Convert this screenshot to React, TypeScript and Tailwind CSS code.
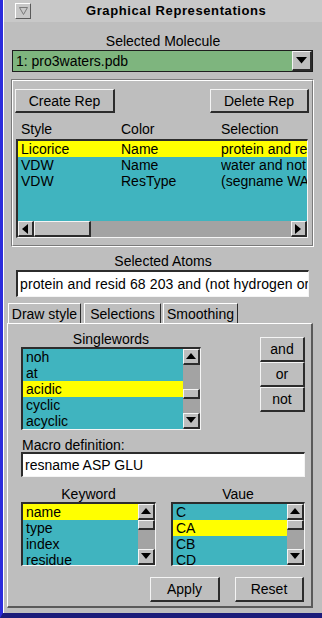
import React from 'react';

const RAISED =
  'border-t border-l border-t-[#f4f4f4] border-l-[#f4f4f4] border-r-2 border-b-2 border-r-[#2c2c2c] border-b-[#2c2c2c]';
const SUNKEN =
  'border-t-2 border-l-2 border-t-[#2c2c2c] border-l-[#2c2c2c] border-r border-b border-r-[#f4f4f4] border-b-[#f4f4f4]';

type Dir = 'up' | 'down' | 'left' | 'right';

const ArrowBtn = ({ dir, size = 'w-[17px] h-[16px]' }: { dir: Dir; size?: string }) => {
  const pts = {
    up: '0,7 5,1 10,7',
    down: '0,1 5,7 10,1',
    left: '7,0 1,5 7,10',
    right: '1,0 7,5 1,10',
  }[dir];
  return (
    <div className={`${size} shrink-0 bg-[#bebebe] ${RAISED} flex items-center justify-center`}>
      <svg width="10" height="10" viewBox="0 0 10 10">
        <polygon points={pts} fill="#000" />
      </svg>
    </div>
  );
};

const VScroll = ({ thumb }: { thumb: string }) => (
  <div className="w-[17px] h-full bg-[#a3a3a3] flex flex-col shrink-0">
    <ArrowBtn dir="up" />
    <div className="flex-1">
      <div className={`w-full bg-[#bebebe] ${RAISED} ${thumb}`} />
    </div>
    <ArrowBtn dir="down" />
  </div>
);

const ListBox = ({
  items,
  sel,
  box,
  thumb,
}: {
  items: string[];
  sel: number;
  box: string;
  thumb: string;
}) => (
  <div className={`${box} ${SUNKEN} bg-[#40b4bf] flex overflow-hidden`}>
    <div className="flex-1 overflow-hidden">
      {items.map((it, i) => (
        <div
          key={it}
          className={`h-4 leading-4 pl-[3px] whitespace-nowrap ${i === sel ? 'bg-[#ffff00]' : ''}`}
        >
          {it}
        </div>
      ))}
    </div>
    <VScroll thumb={thumb} />
  </div>
);

const Button = ({ label, size }: { label: string; size: string }) => (
  <div className={`${size} shrink-0 bg-[#bebebe] ${RAISED} flex items-center justify-center leading-4`}>
    {label}
  </div>
);

const reps = [
  { style: 'Licorice', color: 'Name', sel: 'protein and resid 68 203' },
  { style: 'VDW', color: 'Name', sel: 'water and not hydrogen' },
  { style: 'VDW', color: 'ResType', sel: '(segname WAT)' },
];

export default function App() {
  return (
    <div className="w-[322px] h-[618px] bg-[#bebebe] border-l-[3px] border-l-[#2b2bdc] border-b-[5px] border-b-[#1c1c7a] font-['Liberation_Sans',Arial,sans-serif] text-[14px] text-black overflow-hidden">
      <div className="h-full border-l border-l-white flex flex-col">
        {/* title bar */}
        <div className="h-[22px] shrink-0 bg-[#c8c8c8] flex items-center">
          <div className="ml-[11px] w-4 h-4 bg-[#c8c8c8] border border-t-white border-l-white border-r-[#5a5a5a] border-b-[#5a5a5a] flex items-center justify-center">
            <svg width="9" height="8" viewBox="0 0 9 8">
              <polygon points="0.5,0.5 8.5,0.5 4.5,7.5" fill="none" stroke="#7a7a7a" />
            </svg>
          </div>
          <div className="ml-[55px] font-bold text-[13px] tracking-[0.6px] leading-4">Graphical Representations</div>
        </div>

        {/* selected molecule */}
        <div className="mt-[11px] h-4 leading-4 text-center">Selected Molecule</div>
        <div className="ml-[8px] mt-[1px] w-[301px] h-[22px] bg-[#7eb57e] border border-[#1e1e1e] flex items-center">
          <span className="flex-1 pl-[3px] leading-4">1: pro3waters.pdb</span>
          <div className={`w-[20px] h-[20px] bg-[#bebebe] ${RAISED} flex items-center justify-center`}>
            <svg width="11" height="7" viewBox="0 0 11 7">
              <polygon points="0,0 11,0 5.5,6.5" fill="#000" />
            </svg>
          </div>
        </div>

        {/* reps frame */}
        <div className="ml-[7px] mt-[7px] w-[303px] h-[168px] border border-t-[#7a7a7a] border-l-[#7a7a7a] border-r-white border-b-white">
          <div className="h-full border border-t-white border-l-white border-r-[#7a7a7a] border-b-[#7a7a7a] flex flex-col">
            <div className="mt-[8px] flex">
              <div className="ml-[2px]">
                <Button label="Create Rep" size="w-[100px] h-[24px]" />
              </div>
              <div className="ml-[95px]">
                <Button label="Delete Rep" size="w-[99px] h-[24px]" />
              </div>
            </div>
            <div className="mt-[8px] h-4 leading-4 flex ml-[8px]">
              <span className="w-[100px]">Style</span>
              <span className="w-[100px]">Color</span>
              <span>Selection</span>
            </div>
            <div className={`ml-[3px] mt-[2px] w-[292px] h-[99px] ${SUNKEN} bg-[#40b4bf] flex flex-col overflow-hidden`}>
              <div className="flex-1 overflow-hidden">
                {reps.map((r, i) => (
                  <div
                    key={i}
                    className={`h-4 leading-4 flex whitespace-nowrap ${i === 0 ? 'bg-[#ffff00]' : ''}`}
                  >
                    <span className="pl-[3px] w-[103px] shrink-0">{r.style}</span>
                    <span className="w-[100px] shrink-0">{r.color}</span>
                    <span className="overflow-hidden">{r.sel}</span>
                  </div>
                ))}
              </div>
              <div className="h-[16px] shrink-0 bg-[#a3a3a3] flex">
                <ArrowBtn dir="left" size="w-[16px] h-[16px]" />
                <div className={`w-[57px] h-full bg-[#bebebe] ${RAISED}`} />
                <div className="flex-1" />
                <ArrowBtn dir="right" size="w-[16px] h-[16px]" />
              </div>
            </div>
          </div>
        </div>

        {/* selected atoms */}
        <div className="mt-[6px] h-4 leading-4 text-center">Selected Atoms</div>
        <div className={`ml-[12px] mt-[1px] w-[293px] h-[27px] bg-white ${SUNKEN} flex items-center overflow-hidden`}>
          <span className="pl-[2px] whitespace-nowrap leading-4 tracking-[0.1px]">
            protein and resid 68 203 and (not hydrogen or name CA)
          </span>
        </div>

        {/* tabs */}
        <div className="mt-[6px] h-[20px] flex shrink-0">
          <div className="ml-[4px] w-[73px] h-full border-t border-l border-t-white border-l-white border-r border-r-[#2c2c2c] flex items-center justify-center leading-4">
            Draw style
          </div>
          <div className="ml-[3px] w-[77px] h-full border-t border-l border-t-white border-l-white border-r border-r-[#2c2c2c] flex items-center justify-center leading-4">
            Selections
          </div>
          <div className="ml-[2px] w-[75px] h-full border-t border-l border-t-white border-l-white border-r border-r-[#2c2c2c] flex items-center justify-center leading-4">
            Smoothing
          </div>
        </div>

        {/* selections panel */}
        <div className="ml-[3px] w-[306px] h-[285px] shrink-0 border-t border-l border-t-white border-l-white border-r-2 border-b-2 border-r-[#5a5a5a] border-b-[#5a5a5a] flex flex-col">
          <div className="flex items-start">
            <div className="ml-[13px] w-[180px] flex flex-col">
              <div className="mt-[7px] h-4 leading-4 text-center">Singlewords</div>
              <ListBox
                items={['noh', 'at', 'acidic', 'cyclic', 'acyclic']}
                sel={2}
                box="w-[180px] h-[83px]"
                thumb="mt-[24px] h-[10px]"
              />
            </div>
            <div className="ml-[59px] mt-[13px] flex flex-col">
              <Button label="and" size="w-[45px] h-[25px]" />
              <Button label="or" size="w-[45px] h-[25px]" />
              <Button label="not" size="w-[45px] h-[25px]" />
            </div>
          </div>

          <div className="ml-[14px] mt-[7px] h-[15px] leading-4">Macro definition:</div>
          <div className={`ml-[13px] w-[284px] h-[25px] bg-white ${SUNKEN} flex items-center`}>
            <span className="pl-[2px] leading-4">resname ASP GLU</span>
          </div>

          <div className="mt-[9px] flex">
            <div className="ml-[13px] w-[135px] flex flex-col">
              <div className="h-4 leading-4 text-center">Keyword</div>
              <ListBox
                items={['name', 'type', 'index', 'residue']}
                sel={0}
                box="w-[135px] h-[64px]"
                thumb="h-[10px]"
              />
            </div>
            <div className="ml-[15px] w-[134px] flex flex-col">
              <div className="h-4 leading-4 text-center">Vaue</div>
              <ListBox
                items={['C', 'CA', 'CB', 'CD']}
                sel={1}
                box="w-[134px] h-[64px]"
                thumb="h-[10px]"
              />
            </div>
          </div>

          <div className="mt-[11px] flex">
            <div className="ml-[142px]">
              <Button label="Apply" size="w-[70px] h-[25px]" />
            </div>
            <div className="ml-[15px]">
              <Button label="Reset" size="w-[69px] h-[25px]" />
            </div>
          </div>
        </div>
      </div>
    </div>
  );
}
